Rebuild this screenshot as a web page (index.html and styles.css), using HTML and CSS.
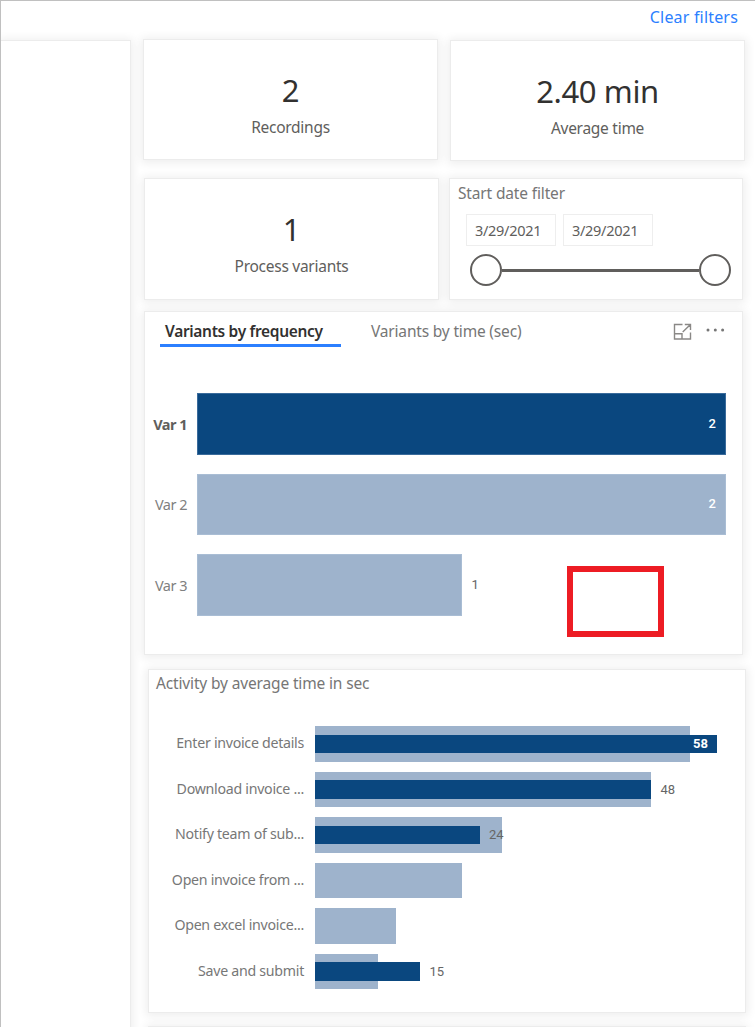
FILE: index.html
```html
<!DOCTYPE html>
<html lang="en">
<head>
<meta charset="utf-8">
<title>Process analytics</title>
<link rel="stylesheet" href="styles.css">
</head>
<body>
<div class="page">
  <header class="topbar"><a class="clear">Clear filters</a></header>
  <div class="body">
    <aside class="side card"></aside>
    <main class="main">
      <div class="row row-top">
        <section class="card kpi kpi-rec"><div class="num">2</div><div class="cap">Recordings</div></section>
        <section class="card kpi kpi-avg"><div class="num">2.40 min</div><div class="cap">Average time</div></section>
      </div>
      <div class="row row-mid">
        <section class="card kpi"><div class="num">1</div><div class="cap">Process variants</div></section>
        <section class="card dates">
          <h2 class="title">Start date filter</h2>
          <div class="inputs"><span class="date">3/29/2021</span><span class="date">3/29/2021</span></div>
          <div class="slider"><i class="knob"></i><i class="track"></i><i class="knob"></i></div>
        </section>
      </div>
      <section class="card variants">
        <nav class="tabs">
          <span class="tab active"><b>Variants by frequency</b></span>
          <span class="tab second">Variants by time (sec)</span>
          <svg class="focus" width="20" height="18" viewBox="0 0 20 18"><path d="M9.5 1.5H1.5V16H17.5V9.5M1.5 10.8H9V16M9.7 9L17.2 1.7M11.8 1.5H17.5V7" /></svg>
          <svg class="more" width="20" height="6" viewBox="0 0 20 6"><circle cx="2" cy="3" r="1.5"/><circle cx="9.3" cy="3" r="1.5"/><circle cx="16.6" cy="3" r="1.5"/></svg>
        </nav>
        <div class="vchart">
          <div class="vrow"><span class="vlabel strong">Var 1</span><div class="vbar dark"><span class="val">2</span></div></div>
          <div class="vrow"><span class="vlabel">Var 2</span><div class="vbar"><span class="val">2</span></div></div>
          <div class="vrow"><span class="vlabel">Var 3</span><div class="vbar half"></div><span class="val out">1</span></div>
        </div>
        <div class="callout"></div>
      </section>
      <section class="card activity">
        <h2 class="title">Activity by average time in sec</h2>
        <div class="achart">
          <div class="arow"><span class="alabel">Enter invoice details</span><div class="plot"><div class="avg" style="width:375px"></div><div class="cur" style="width:402px"><span class="val">58</span></div></div></div>
          <div class="arow"><span class="alabel">Download invoice ...</span><div class="plot"><div class="avg" style="width:336px"></div><div class="cur" style="width:336px"></div><span class="val out">48</span></div></div>
          <div class="arow"><span class="alabel">Notify team of sub...</span><div class="plot"><div class="avg" style="width:187px"></div><div class="cur" style="width:164.5px"></div><span class="val out">24</span></div></div>
          <div class="arow"><span class="alabel">Open invoice from ...</span><div class="plot"><div class="avg" style="width:147px"></div></div></div>
          <div class="arow"><span class="alabel">Open excel invoice...</span><div class="plot"><div class="avg" style="width:80.5px"></div></div></div>
          <div class="arow"><span class="alabel">Save and submit</span><div class="plot"><div class="avg" style="width:63px"></div><div class="cur" style="width:105px"></div><span class="val out">15</span></div></div>
        </div>
      </section>
      <section class="card next"></section>
    </main>
  </div>
</div>
</body>
</html>
```
FILE: styles.css
```css
* { box-sizing: border-box; }
body { margin: 0; background: #fff; font-family: "Noto Sans", "Open Sans", sans-serif; color: #605e5c; }
.page { width: 755px; height: 1027px; overflow: hidden; border-left: 1px solid #c0c0c0; border-top: 1px solid #c0c0c0; }
.topbar { height: 37px; display: flex; justify-content: flex-end; padding: 4px 17px 0 0; }
.clear { color: #2b7fff; font-size: 16px; line-height: 24px; letter-spacing: .18px; white-space: nowrap; }
.body { display: flex; height: 989px; }
.card { background: #fff; border: 1px solid #ececec; box-shadow: 0 1px 9px 2px rgba(0,0,0,.07); }
.side { width: 130px; margin-top: 2px; height: 1000px; border-left: 0; flex: none; }
.main { width: 624px; flex: none; display: flex; flex-direction: column; }
.row { display: flex; align-items: flex-start; flex: none; }
.row-top { height: 139px; padding-left: 12px; gap: 12px; }
.row-mid { height: 134px; padding: 1px 0 0 13px; gap: 10px; }
.kpi { width: 295px; height: 122px; display: flex; flex-direction: column; align-items: center; padding-top: 29px; }
.kpi-rec { margin-top: 1px; height: 121px; }
.kpi-avg { margin-top: 2px; height: 121px; }
.num { font-size: 31px; line-height: 42px; color: #323130; font-weight: 400; letter-spacing: -.4px; }
.cap { font-size: 15.5px; line-height: 22px; margin-top: 5px; letter-spacing: -.27px; white-space: nowrap; }
.dates { width: 294px; height: 122px; padding: 3px 0 0 8px; }
.title { margin: 0; font-size: 15.5px; line-height: 22px; letter-spacing: -.15px; font-weight: 400; color: #767676; white-space: nowrap; }
.inputs { display: flex; gap: 7px; margin: 10px 0 0 8px; }
.date { width: 90px; height: 32px; border: 1px solid #eee; padding-left: 8px; font-size: 14.5px; line-height: 30px; letter-spacing: -.3px; white-space: nowrap; }
.slider { display: flex; align-items: center; margin: 8px 0 0 12px; width: 261px; height: 32px; }
.knob { width: 32px; height: 32px; border: 2px solid #605e5c; border-radius: 50%; flex: none; }
.track { flex: 1; height: 3px; background: #605e5c; }
.variants { position: relative; width: 599px; height: 344px; margin-left: 13px; flex: none; }
.tabs { height: 40px; display: flex; align-items: flex-start; padding-left: 15px; }
.tab { font-size: 15.5px; line-height: 22px; padding-top: 8px; letter-spacing: -.18px; color: #767676; white-space: nowrap; }
.active { width: 181px; height: 35px; border-bottom: 3px solid #2b7fff; padding-left: 5px; letter-spacing: -.33px; color: #323130; }
.active b { font-weight: 600; }
.second { margin-left: 30px; width: 160px; }
.focus { margin: 10.5px 0 0 141.5px; fill: none; stroke: #8a8886; stroke-width: 1.4; }
.more { margin: 15px 0 0 13px; fill: #767676; }
.vchart { display: flex; flex-direction: column; gap: 19px; padding-top: 41px; }
.vrow { display: flex; align-items: center; height: 61.6px; }
.vlabel { width: 52px; padding-right: 10px; text-align: right; font-size: 14.5px; letter-spacing: -.5px; color: #808080; flex: none; white-space: nowrap; }
.strong { font-weight: 700; color: #605e5c; }
.vbar { width: 529px; height: 100%; background: #9eb3cc; border: 1px solid #a9bdd4; display: flex; align-items: center; justify-content: flex-end; padding-right: 9px; }
.dark { background: #0a477f; border-color: #3a6b9b; }
.half { width: 265px; }
.val { font-family: Roboto, sans-serif; font-size: 13px; line-height: 16px; color: #fff; font-weight: 500; }
.val.out { color: #666; margin-left: 9.5px; font-weight: 400; z-index: 1; }
.callout { position: absolute; left: 422px; top: 254px; width: 97px; height: 71px; border: 6.5px solid #ed1c24; }
.activity { width: 598px; height: 344px; margin: 14px 0 0 17px; padding: 2px 0 0 7px; flex: none; }
.achart { display: flex; flex-direction: column; gap: 9.5px; padding-top: 32px; }
.arow { display: flex; align-items: center; height: 36px; }
.alabel { width: 159px; padding: 0 11px 2px 0; text-align: right; font-size: 14.2px; line-height: 20px; letter-spacing: -.28px; color: #777; flex: none; white-space: nowrap; }
.plot { position: relative; height: 36px; display: flex; align-items: center; }
.avg { position: absolute; left: 0; top: 0; height: 35.5px; background: #9eb3cc; }
.cur { position: relative; height: 18.5px; background: #0a477f; display: flex; align-items: center; justify-content: flex-end; padding-right: 9px; }
.cur .val { font-weight: 700; }
.next { width: 598px; height: 40px; margin: 13px 0 0 17px; flex: none; }
```
